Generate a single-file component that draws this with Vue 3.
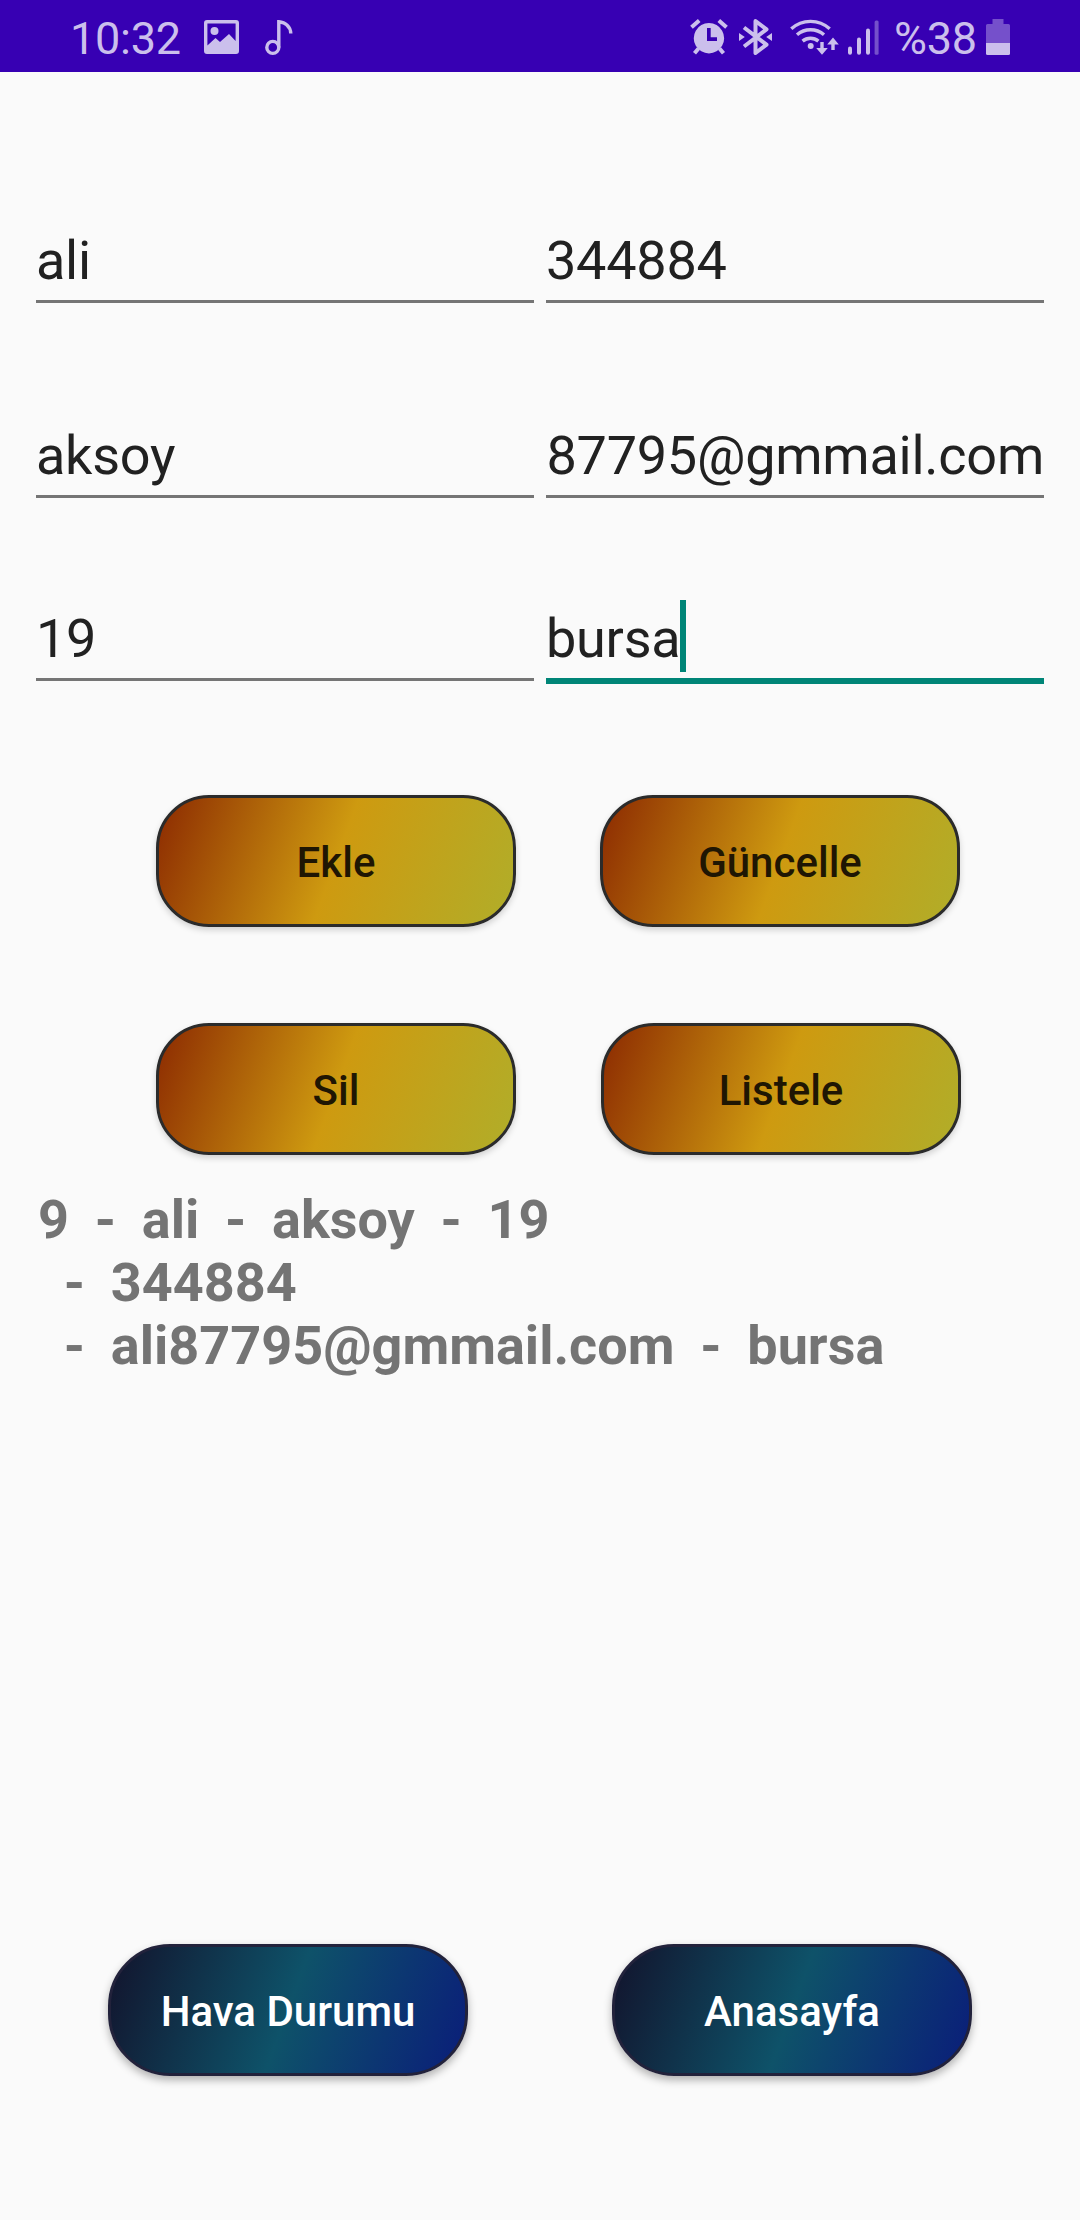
<script setup>
import { ref } from 'vue'

const fields = ref([
  [{ value: 'ali' }, { value: '344884' }],
  [{ value: 'aksoy' }, { value: '87795@gmmail.com', end: true }],
  [{ value: '19' }, { value: 'bursa', focused: true }],
])

const record = '9  -  ali  -  aksoy  -  19\n  -  344884\n  -  ali87795@gmmail.com  -  bursa'
</script>

<template>
  <div class="screen">
    <header class="status">
      <span class="clock">10:32</span>
      <svg class="picture" width="35" height="34" viewBox="0 0 35 34">
        <path fill-rule="evenodd" d="M3 0H32Q35 0 35 3V31Q35 34 32 34H3Q0 34 0 31V3Q0 0 3 0ZM3.4 3.4V25.5L11.5 18L16 22L25 14L31.6 21V3.4Z" />
        <circle cx="10.5" cy="11" r="4" />
      </svg>
      <svg class="note" width="28" height="36" viewBox="0 0 28 36">
        <g fill="none" stroke="currentColor" stroke-width="3.4">
          <circle cx="7.8" cy="27.4" r="6" />
          <path d="M13.8 27.4V1.7C20.5 2.3 25.5 6.5 25.8 13.5" />
        </g>
      </svg>
      <span class="spacer"></span>
      <svg class="alarm" width="38" height="36" viewBox="0 0 38 36">
        <path fill-rule="evenodd" d="M19 4A15.2 15.2 0 1 1 18.9 4ZM17 9V22H27V18.2H20.7V9Z" />
        <path fill="none" stroke="currentColor" stroke-width="4" d="M1.5 8.3L9.2 1.5M28.8 1.5L36.5 8.3" />
        <path fill="none" stroke="currentColor" stroke-width="4" d="M8.5 29.5L4.5 34.2M29.5 29.5L33.5 34.2" />
      </svg>
      <svg class="bluetooth" width="34" height="38" viewBox="0 0 34 38">
        <path fill="none" stroke="currentColor" stroke-width="4" stroke-linejoin="round" d="M5 9.5L27.5 26.7L16.5 35V3L27.5 11.3L5 28.5" />
        <path d="M0 15L5.8 19L0 23ZM33 15L27.2 19L33 23Z" />
      </svg>
      <svg class="wifi" width="49" height="38" viewBox="0 0 49 38">
        <g fill="none" stroke="currentColor" stroke-width="3.4">
          <path d="M1.3 10.8A28.5 28.5 0 0 1 39.7 10.8" />
          <path d="M7 16.8A20.5 20.5 0 0 1 34 16.8" />
          <path d="M12.6 23.1A12.2 12.2 0 0 1 28.4 23.1" />
          <path d="M32 24V33M43 32V23" />
        </g>
        <circle cx="20.7" cy="28" r="3" />
        <path d="M26.2 30L32 36.8L37.8 30ZM37.2 26.5L43 19.6L48.8 26.5Z" />
      </svg>
      <svg class="signal" width="31" height="35" viewBox="0 0 31 35">
        <rect x="0" y="26.5" width="4" height="8.2" rx="2" />
        <rect x="9" y="17.5" width="4" height="17.2" rx="2" />
        <rect x="18" y="8.5" width="4" height="26.2" rx="2" />
        <rect x="26.6" y="0.5" width="4" height="34.2" rx="1.5" opacity=".42" />
      </svg>
      <span class="percent">%38</span>
      <svg class="battery" width="24" height="36" viewBox="0 0 24 36">
        <path opacity=".42" d="M6.5 0H17.5V5H22.5Q24 5 24 6.5V24H0V6.5Q0 5 1.5 5H6.5Z" />
        <path d="M0 24H24V34.5Q24 36 22.5 36H1.5Q0 36 0 34.5Z" />
      </svg>
    </header>

    <main class="form">
      <div v-for="(row, r) in fields" :key="r" class="row">
        <div v-for="(field, c) in row" :key="c" class="field" :class="{ focused: field.focused, end: field.end }">
          <span class="value">{{ field.value }}</span><i v-if="field.focused" class="caret"></i>
        </div>
      </div>
    </main>

    <div class="actions first">
      <button class="btn amber">Ekle</button>
      <button class="btn amber">Güncelle</button>
    </div>
    <div class="actions second">
      <button class="btn amber">Sil</button>
      <button class="btn amber">Listele</button>
    </div>

    <p class="record">{{ record }}</p>

    <nav class="links">
      <button class="btn navy">Hava Durumu</button>
      <button class="btn navy">Anasayfa</button>
    </nav>
  </div>
</template>

<style>
body { margin: 0; background: #fafafa; }
</style>

<style scoped>
.screen {
  box-sizing: border-box;
  width: 1080px;
  height: 2220px;
  overflow: hidden;
  background: #fafafa;
  font-family: Roboto, sans-serif;
  display: flex;
  flex-direction: column;
}
.status {
  box-sizing: border-box;
  flex: none;
  height: 72px;
  padding: 0 70px;
  background: #3700b3;
  color: #cbbfec;
  display: flex;
  align-items: flex-start;
}
.status svg { flex: none; fill: currentColor; margin-top: 20px; }
.clock, .percent {
  font-size: 45px;
  line-height: 52px;
  letter-spacing: -.25px;
  margin-top: 13px;
  white-space: nowrap;
}
.clock { width: 134px; }
.note { margin-left: 26px; }
.spacer { flex: 1; }
.status .alarm { margin-top: 19px; }
.status .bluetooth { margin-left: 11px; margin-top: 18px; }
.status .wifi { margin-left: 17px; margin-top: 18px; }
.signal { margin-left: 9px; }
.percent { width: 92px; margin-left: 15px; }
.status .battery { margin-top: 19px; }

.form { padding: 0 36px; }
.row { display: flex; gap: 12px; height: 74px; }
.row:nth-child(1) { margin-top: 157px; }
.row:nth-child(2) { margin-top: 121px; }
.row:nth-child(3) { margin-top: 109px; }
.field {
  box-sizing: border-box;
  width: 498px;
  height: 74px;
  display: flex;
  align-items: flex-start;
  font-size: 54px;
  line-height: 63px;
  letter-spacing: -.25px;
  color: #212121;
  border-bottom: 3px solid #757575;
  white-space: nowrap;
}
.field.end { justify-content: flex-end; }
.field.focused { height: 77px; border-bottom: 6px solid #008577; }
.caret { width: 6px; height: 72px; margin-top: -7px; background: #008577; }

.actions, .links { display: flex; }
.first { margin-top: 114px; padding-left: 156px; gap: 84px; }
.second { margin-top: 96px; padding-left: 156px; gap: 85px; }
.btn {
  box-sizing: border-box;
  flex: none;
  width: 360px;
  height: 132px;
  padding: 2px 0 0;
  font: 500 42px/49px Roboto, sans-serif;
}
.amber {
  color: #1f1603;
  border: 3px solid #2b2b2b;
  border-radius: 53px;
  background: linear-gradient(110.1deg, #8b2801, #ce9a10 50%, #b0ae2a) border-box;
  box-shadow: 0 3px 6px rgba(0, 0, 0, .17);
}
.navy {
  color: #fff;
  border: 3px solid #22223b;
  border-radius: 62px;
  background: linear-gradient(110.1deg, #12122b, #0e5269 50%, #0a1c7a) border-box;
  box-shadow: 0 4px 9px rgba(0, 0, 0, .3);
}
.record {
  margin: 33px 0 0 38px;
  font-weight: 700;
  font-size: 54px;
  line-height: 63px;
  word-spacing: -.55px;
  color: #747474;
  white-space: pre;
}
.links { margin: auto 0 144px 108px; gap: 144px; }
</style>
